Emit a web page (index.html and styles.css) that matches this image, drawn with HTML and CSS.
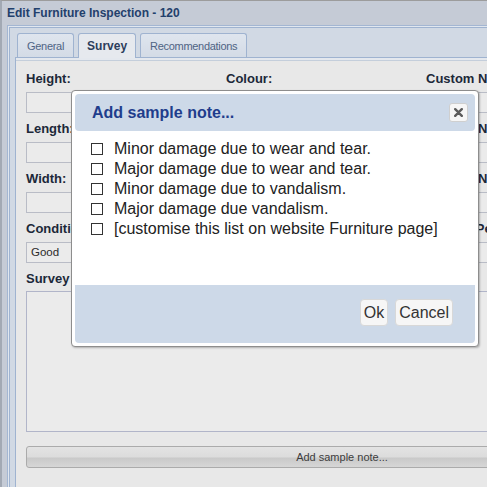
FILE: index.html
```html
<!DOCTYPE html>
<html>
<head>
<meta charset="utf-8">
<link rel="stylesheet" href="styles.css">
</head>
<body>
<div class="window">
  <div class="titlebar">Edit Furniture Inspection - 120</div>
  <div class="frame">
    <div class="tabpanel">
      <div class="strip">
        <div class="tab">General</div>
        <div class="tab active">Survey</div>
        <div class="tab">Recommendations</div>
      </div>
      <div class="bodywrap">
        <div class="spacer"></div>
        <div class="tabbody">
          <div class="form">
            <div class="row">
              <div class="col"><label>Height:</label><div class="input"></div></div>
              <div class="col"><label>Colour:</label><div class="input"></div></div>
              <div class="col"><label>Custom Number 1:</label><div class="input"></div></div>
            </div>
            <div class="row">
              <div class="col"><label>Length:</label><div class="input"></div></div>
              <div class="col"><label>Material:</label><div class="input"></div></div>
              <div class="col"><label>Custom Number 2:</label><div class="input"></div></div>
            </div>
            <div class="row">
              <div class="col"><label>Width:</label><div class="input"></div></div>
              <div class="col"><label>Manufacturer:</label><div class="input"></div></div>
              <div class="col"><label>Custom Number 3:</label><div class="input"></div></div>
            </div>
            <div class="row">
              <div class="col"><label>Condition:</label><div class="input">Good</div></div>
              <div class="col"><label>Location:</label><div class="input"></div></div>
              <div class="col"><label>Service Period:</label><div class="input"></div></div>
            </div>
            <div class="notes">
              <label>Survey Notes:</label>
              <div class="textarea"></div>
            </div>
            <div class="wide-btn">Add sample note...</div>
          </div>
        </div>
      </div>
    </div>
  </div>
</div>

<div class="dialog">
  <div class="dlg-head">
    <span class="dlg-title">Add sample note...</span>
    <span class="dlg-close"><svg width="9" height="9" viewBox="0 0 9 9"><path d="M1.2 1.2 L7.8 7.8 M7.8 1.2 L1.2 7.8" stroke="#5c5c5c" stroke-width="2.4" stroke-linecap="round"/></svg></span>
  </div>
  <div class="dlg-body">
    <div class="item"><span class="cb"></span>Minor damage due to wear and tear.</div>
    <div class="item"><span class="cb"></span>Major damage due to wear and tear.</div>
    <div class="item"><span class="cb"></span>Minor damage due to vandalism.</div>
    <div class="item"><span class="cb"></span>Major damage due vandalism.</div>
    <div class="item"><span class="cb"></span>[customise this list on website Furniture page]</div>
  </div>
  <div class="dlg-foot">
    <span class="btn">Ok</span>
    <span class="btn">Cancel</span>
  </div>
</div>
</body>
</html>
```

FILE: styles.css
```css
html, body {
  margin: 0;
  padding: 0;
  width: 487px;
  height: 487px;
  overflow: hidden;
  font-family: "Liberation Sans", Arial, sans-serif;
  background: #e8e8e8;
}

.window {
  height: 486px;
  border-top: 1px solid #9c9c9c;
  border-left: 2px solid #a2a9b4;
  background: #c5cbd6;
  padding-left: 5px;
  display: flex;
  flex-direction: column;
}

.titlebar {
  height: 24px;
  line-height: 24px;
  font-size: 12px;
  font-weight: bold;
  color: #23406c;
  white-space: nowrap;
}

.frame {
  flex: 1;
  border-top: 1px solid #a3b6d2;
  border-left: 1px solid #a3b6d2;
  background: #e1e7ef;
  padding: 1px 0 0 1px;
  display: flex;
  flex-direction: column;
}

.tabpanel {
  flex: 1;
  border-top: 1px solid #9fb3d0;
  border-left: 1px solid #9fb3d0;
  background: #d1d9e4;
  padding-left: 5px;
  display: flex;
  flex-direction: column;
}

.strip {
  height: 29px;
  border-bottom: 1px solid #9fb3d0;
  display: flex;
  align-items: flex-end;
  gap: 4px;
  padding-left: 2px;
  box-sizing: content-box;
}

.tab {
  height: 24px;
  box-sizing: border-box;
  padding: 5px 9px 0;
  border: 1px solid #9fb3d0;
  border-bottom: none;
  border-radius: 3px 3px 0 0;
  background: linear-gradient(#dfe5ee, #d3dbe6);
  font-size: 11px;
  letter-spacing: -0.3px;
  line-height: 14px;
  color: #4f6484;
  margin-bottom: 0;
  white-space: nowrap;
}

.tab.active {
  height: 25px;
  margin-bottom: -1px;
  background: #e6e9ee;
  font-weight: bold;
  font-size: 12px;
  letter-spacing: 0;
  color: #2c3e5c;
  padding: 5px 8px 0;
}

.bodywrap {
  flex: 1;
  border-left: 1px solid #9fb3d0;
  display: flex;
  flex-direction: column;
}

.spacer {
  height: 2px;
  background: #e4e8ee;
}

.tabbody {
  flex: 1;
  border-top: 1px solid #c4cedb;
  background: #e8e8e8;
}

.form {
  padding: 10px 0 0 10px;
  width: 640px;
}

.row {
  display: grid;
  grid-template-columns: 200px 200px 200px;
  margin-bottom: 8px;
}

label {
  display: block;
  font-size: 13px;
  font-weight: bold;
  line-height: 15px;
  color: #1c2839;
  margin-bottom: 6px;
  white-space: nowrap;
}

.input {
  width: 180px;
  height: 21px;
  box-sizing: border-box;
  border: 1px solid #b9bcc6;
  background: #ebebeb;
  font-size: 11.5px;
  line-height: 19px;
  padding-left: 4px;
  color: #2a2a2a;
}

.col:nth-child(3) .input {
  width: 200px;
}

.notes label {
  margin-bottom: 5px;
}

.textarea {
  width: 632px;
  height: 141px;
  box-sizing: border-box;
  border: 1px solid #b1b5c9;
  background: #ebebeb;
}

.wide-btn {
  margin-top: 14px;
  width: 632px;
  height: 22px;
  box-sizing: border-box;
  border: 1px solid #ababab;
  border-radius: 3px;
  background: linear-gradient(#e3e3e3 0%, #dcdcdc 50%, #c9c9c9 55%, #cfcfcf 75%, #d6d6d6 100%);
  font-size: 11px;
  line-height: 20px;
  text-align: center;
  color: #3c3c3c;
}

/* dialog */
.dialog {
  position: absolute;
  left: 71px;
  top: 90px;
  width: 408px;
  height: 257px;
  box-sizing: border-box;
  border: 1px solid #8d8d8d;
  border-radius: 4px;
  background: #fff;
  padding: 3px;
  box-shadow: 1px 1px 2px rgba(0, 0, 0, 0.25);
  display: flex;
  flex-direction: column;
  font-family: "Liberation Sans", Arial, sans-serif;
}

.dlg-head {
  height: 37px;
  background: #cdd9e8;
  border-radius: 4px;
  display: flex;
  align-items: center;
  justify-content: space-between;
  padding: 0 7px 0 17px;
  box-sizing: border-box;
}

.dlg-title {
  font-size: 16px;
  font-weight: bold;
  line-height: 18px;
  color: #1f3d8c;
}

.dlg-close {
  width: 19px;
  height: 19px;
  box-sizing: border-box;
  border: 1px solid #cfcfcf;
  border-radius: 3px;
  background: #f6f6f6;
  display: flex;
  align-items: center;
  justify-content: center;
}

.dlg-body {
  height: 154px;
  box-sizing: border-box;
  padding: 8px 0 0 16px;
}

.item {
  display: flex;
  align-items: center;
  height: 20px;
  font-size: 16px;
  line-height: 20px;
  color: #222;
  white-space: nowrap;
}

.cb {
  width: 12px;
  height: 12px;
  box-sizing: border-box;
  border: 1px solid #333;
  background: #fff;
  margin-right: 11px;
  margin-top: -1px;
}

.dlg-foot {
  flex: 1;
  background: #cdd9e8;
  border-radius: 0 0 4px 4px;
  display: flex;
  justify-content: flex-end;
  align-items: flex-start;
  gap: 7px;
  padding: 14px 22px 0 0;
}

.btn {
  height: 27px;
  box-sizing: border-box;
  border: 1px solid #d8d8d8;
  border-radius: 4px;
  background: #f6f6f6;
  padding: 0 3px;
  font-size: 16px;
  line-height: 25px;
  color: #333;
}
```
